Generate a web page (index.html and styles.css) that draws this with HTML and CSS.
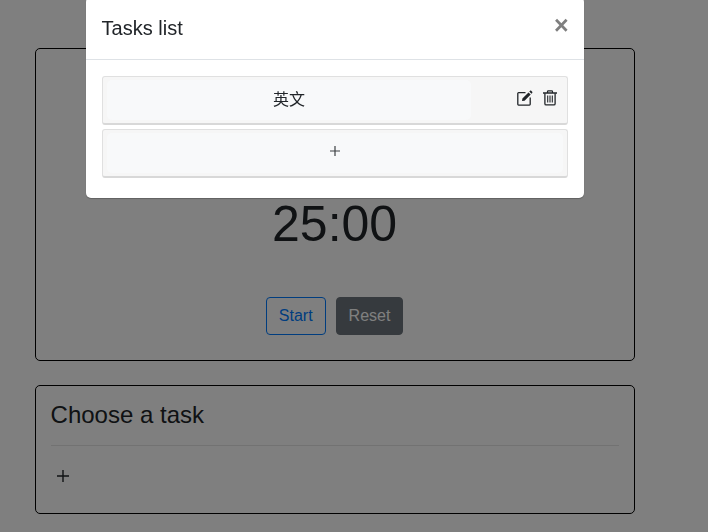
FILE: index.html
```html
<!DOCTYPE html>
<html lang="en">
<head>
    <meta charset="UTF-8">
    <meta name="viewport" content="width=device-width, initial-scale=1.0">
    <title>Pomodoro</title>
    <link rel="stylesheet" href="styles.css">
</head>
<body>
    <div class="container">
        <div class="card timer-card">
            <div class="timer">25:00</div>
            <div class="timer-buttons">
                <button class="btn btn-start">Start</button>
                <button class="btn btn-reset">Reset</button>
            </div>
        </div>
        <div class="card task-card">
            <h2 class="task-title">Choose a task</h2>
            <hr class="divider">
            <div class="task-add">
                <svg class="plus" viewBox="0 0 12 12" width="12" height="12">
                    <path d="M6 0v12M0 6h12" fill="none" stroke="#212529" stroke-width="1.4"/>
                </svg>
            </div>
        </div>
    </div>

    <div class="backdrop"></div>
    <div class="modal">
        <div class="modal-header">
            <h5 class="modal-title">Tasks list</h5>
            <span class="close">&times;</span>
        </div>
        <div class="modal-body">
            <div class="list-item">
                <div class="item-name">英文</div>
                <div class="item-actions">
                    <svg class="icon" viewBox="0 0 16 16" width="16" height="16">
                        <path d="M8.5 2.7H1.6a.8.8 0 0 0-.8.8v10.8a.8.8 0 0 0 .8.8h10.8a.8.8 0 0 0 .8-.8V7.6" fill="none" stroke="#212529" stroke-width="1.3"/>
                        <path d="M5 11 5.4 8.5 11.5 2.4 13.7 4.6 7.6 10.7zM12.3 1.6 13.1.8c.4-.3.8-.3 1.1 0l1 1c.3.3.3.8 0 1.1l-.8.8z" fill="#212529"/>
                    </svg>
                    <svg class="icon" viewBox="0 0 14 16" width="14" height="16">
                        <path d="M0 3h14" fill="none" stroke="#212529" stroke-width="1.5"/>
                        <path d="M4.5 3V1.6c0-.5.3-.8.8-.8h3.4c.5 0 .8.3.8.8V3" fill="none" stroke="#212529" stroke-width="1.2"/>
                        <path d="M1.9 3.2v10.5c0 .7.5 1.2 1.2 1.2h7.8c.7 0 1.2-.5 1.2-1.2V3.2" fill="none" stroke="#212529" stroke-width="1.3"/>
                        <path d="M4.7 5.5v7M7 5.5v7M9.3 5.5v7" fill="none" stroke="#212529" stroke-width="1.1"/>
                    </svg>
                </div>
            </div>
            <div class="list-item">
                <div class="item-add">
                    <svg class="plus" viewBox="0 0 10 10" width="10" height="10">
                        <path d="M5 0v10M0 5h10" fill="none" stroke="#3c4043" stroke-width="1.2"/>
                    </svg>
                </div>
            </div>
        </div>
    </div>
</body>
</html>
```

FILE: styles.css
```css
html, body {
    margin: 0;
    padding: 0;
    height: 100%;
    overflow: hidden;
    font-family: "Liberation Sans", Arial, sans-serif;
    color: #212529;
    background: #fff;
}
.container {
    width: 600px;
    margin-left: 34.6px;
    padding-top: 48px;
}
.card {
    box-sizing: border-box;
    border: 1px solid #000;
    border-radius: 5px;
}
.timer-card {
    height: 313px;
    padding-top: 145px;
    text-align: center;
}
.timer {
    font-size: 50px;
    line-height: 60px;
}
.timer-buttons {
    display: flex;
    justify-content: center;
    gap: 10px;
    margin-top: 43px;
}
.btn {
    box-sizing: border-box;
    height: 38px;
    padding: 0 12px;
    border: 1px solid transparent;
    border-radius: 4px;
    font-family: inherit;
    font-size: 16px;
}
.btn-start {
    background: #fff;
    border-color: #007bff;
    color: #007bff;
}
.btn-reset {
    background: #6c757d;
    border-color: #6c757d;
    color: #fff;
}
.task-card {
    height: 129px;
    margin-top: 24px;
    padding: 14px 15px 15px;
}
.task-title {
    margin: 0;
    font-size: 24px;
    font-weight: 400;
    line-height: 29px;
}
.divider {
    margin: 16px 0 0;
    border: 0;
    border-top: 1px solid rgba(0, 0, 0, 0.1);
}
.task-add {
    display: flex;
    padding: 24px 0 0 6px;
}
.backdrop {
    position: fixed;
    inset: 0;
    background: rgba(0, 0, 0, 0.5);
}
.modal {
    position: fixed;
    top: -3px;
    left: 85.6px;
    box-sizing: border-box;
    width: 498px;
    background: #fff;
    border-radius: 5px;
    box-shadow: 0 1px 1px rgba(0, 0, 0, 0.25);
}
.modal-header {
    display: flex;
    justify-content: space-between;
    padding: 16px;
    border-bottom: 1px solid #dee2e6;
}
.modal-title {
    margin: 0;
    font-size: 20px;
    font-weight: 400;
    line-height: 30px;
}
.close {
    margin-right: -1px;
    font-size: 25px;
    font-weight: 700;
    line-height: 24px;
    color: #7f7f7f;
}
.modal-body {
    display: flex;
    flex-direction: column;
    gap: 4px;
    padding: 16px 16px 20px;
}
.list-item {
    box-sizing: border-box;
    display: flex;
    align-items: stretch;
    height: 49px;
    padding: 3px 4px;
    background: #f6f6f6;
    border: 1px solid #e0e0e0;
    border-bottom: 2px solid #d8d8d8;
    border-radius: 3px;
    font-size: 16px;
}
.item-name {
    box-sizing: border-box;
    display: flex;
    align-items: center;
    justify-content: center;
    width: 364px;
    padding: 0 0 4px 1px;
    background: #f8f9fa;
    border-radius: 5px;
    font-family: "Liberation Sans", "Noto Sans CJK SC", sans-serif;
}
.item-actions {
    display: flex;
    align-items: center;
    gap: 10px;
    margin-left: 46px;
    padding-bottom: 5px;
}
.item-add {
    box-sizing: border-box;
    display: flex;
    flex: 1;
    align-items: center;
    justify-content: center;
    padding-bottom: 4px;
    background: #f8f9fa;
    border-radius: 5px;
}
```
